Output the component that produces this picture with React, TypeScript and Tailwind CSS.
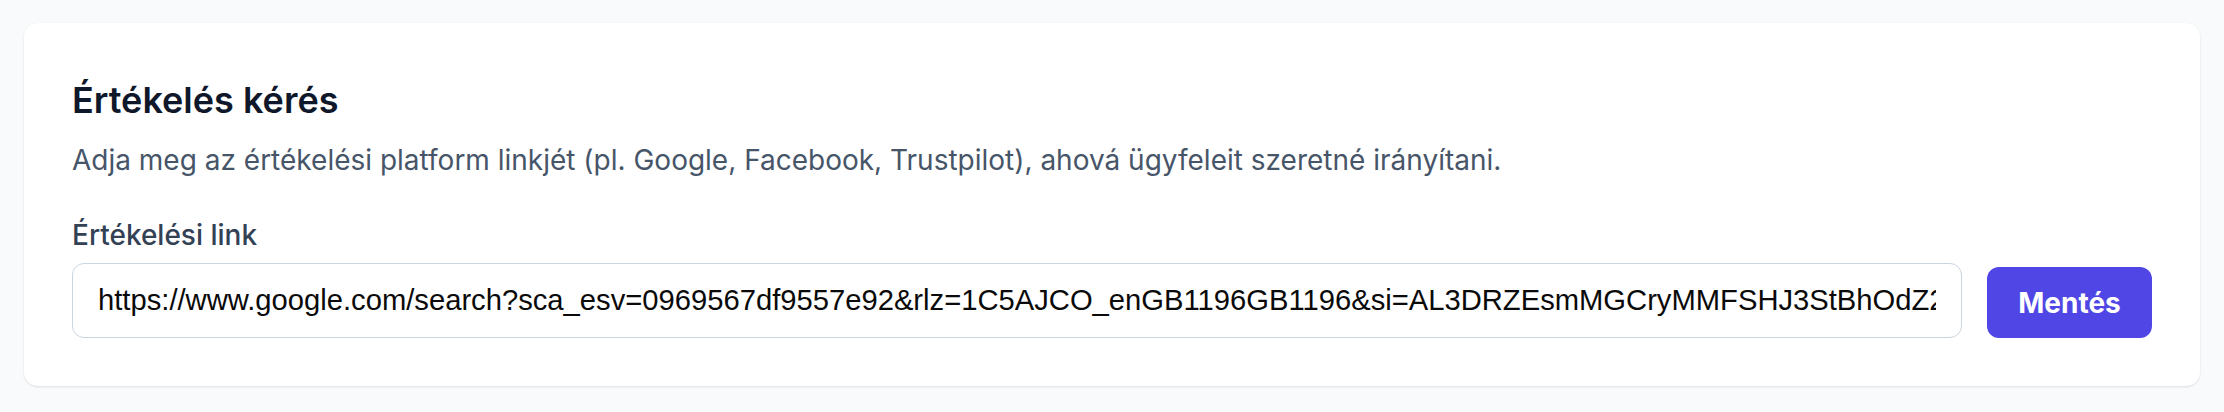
import React, { useState } from 'react';

const initialLink =
    'https://www.google.com/search?sca_esv=0969567df9557e92&rlz=1C5AJCO_enGB1196GB1196&si=AL3DRZEsmMGCryMMFSHJ3StBhOdZ2mD0rKq8vZ1uP7bH3xT9aLkQwEr5yN';

export default function App() {
    const [link, setLink] = useState(initialLink);

    return (
        <div className="min-h-[412px] bg-[#f8fafc] px-[24px] pt-[23px] pb-[26px] font-['Inter',sans-serif]">
            {/* Review request card */}
            <div className="bg-white rounded-[14px] shadow-[0_1px_3px_rgba(15,23,42,0.08),0_1px_2px_rgba(15,23,42,0.04)] px-[48px] pt-[55px] pb-[48px]">
                <h2 className="text-[36px] leading-[44px] font-semibold text-[#0f172a]">Értékelés kérés</h2>
                <p className="mt-[18px] text-[28px] leading-[40px] text-[#475569]">
                    Adja meg az értékelési platform linkjét (pl. Google, Facebook, Trustpilot), ahová ügyfeleit szeretné irányítani.
                </p>

                <label htmlFor="review-link" className="block mt-[35px] text-[28px] leading-[40px] font-medium text-[#334155]">
                    Értékelési link
                </label>
                <div className="mt-[8px] flex items-end gap-[25px]">
                    <input
                        id="review-link"
                        type="text"
                        value={link}
                        onChange={(e) => setLink(e.target.value)}
                        className="flex-1 min-w-0 h-[75px] rounded-[12px] border-[1.5px] border-[#cbd5e1] bg-white pl-[25px] pr-[25px] text-[29.2px] text-[#0a0a0a] font-['Liberation_Sans',Arial,sans-serif] focus:outline-none"
                    />
                    <button className="w-[165px] h-[71px] shrink-0 rounded-[12px] bg-[#4f46e5] text-white text-[28px] font-bold">
                        Mentés
                    </button>
                </div>
            </div>
        </div>
    );
}
